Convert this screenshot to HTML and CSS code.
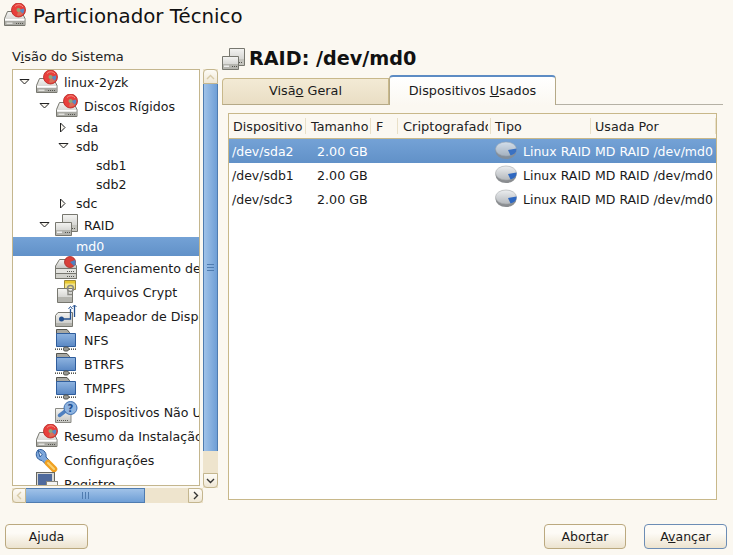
FILE: index.html
```html
<!DOCTYPE html>
<html lang="pt">
<head>
<meta charset="utf-8">
<title>Particionador Técnico</title>
<link rel="stylesheet" href="styles.css">
</head>
<body>
<svg class="defs" width="0" height="0" aria-hidden="true">
  <defs>
    <linearGradient id="gBox" x1="0" y1="0" x2="0" y2="1"><stop offset="0" stop-color="#f4f4f2"/><stop offset="1" stop-color="#c4c4c0"/></linearGradient>
    <linearGradient id="gFolder" x1="0" y1="0" x2="0" y2="1"><stop offset="0" stop-color="#8fb4e0"/><stop offset="1" stop-color="#5a88c4"/></linearGradient>
    <linearGradient id="gPie" x1="0" y1="0" x2="0" y2="1"><stop offset="0" stop-color="#eceef0"/><stop offset="1" stop-color="#b4b8bc"/></linearGradient>
    <g id="drive">
      <path d="M4.500 8.500 H18.500 L22 15.500 V22.500 H1.500 V15.500 Z" fill="url(#gBox)" stroke="#77776f"/>
      <rect x="2" y="16" width="19.500" height="1.500" fill="#fff"/>
      <rect x="2" y="18" width="19.500" height="4" fill="#aaaaa4"/>
      <path d="M13 20.500h7.500" stroke="#55554f" stroke-dasharray="1 1"/>
      <rect x="3.500" y="19.500" width="6" height="1.500" fill="#e2e2de"/>
    </g>
    <g id="hdred">
      <use href="#drive"/>
      <circle cx="15.500" cy="7" r="7" fill="#e8403c" stroke="#b52420" stroke-width=".8"/>
      <path d="M12 3.500 A5 5 0 0 1 20 4" fill="none" stroke="#f48a80"/>
      <path d="M15.500 7 L21 5.500 A5.800 5.800 0 0 1 20 11 Z" fill="#5a88c4"/>
      <path d="M15.500 7 L20 11 A6 6 0 0 1 14 12.500 Z" fill="#d8705a"/>
      <circle cx="15.500" cy="7" r="2" fill="#8fa878"/>
    </g>
    <g id="raidbox">
      <path d="M0.500 9.500 H16.500 V22.500 H0.500 Z" fill="url(#gBox)" stroke="#77776f"/>
      <rect x="1" y="17" width="15" height="5" fill="#b4b4ae"/>
      <rect x="2" y="18.500" width="5" height="1.500" fill="#eee"/>
      <path d="M10 19.500h5" stroke="#55554f" stroke-dasharray="1 1"/>
    </g>
    <g id="raid">
      <path d="M7.500 1.500 H22.500 V18.500 H7.500 Z" fill="url(#gBox)" stroke="#77776f"/>
      <rect x="8" y="12" width="14" height="6" fill="#c4c4be"/>
      <path d="M17 15.500h4" stroke="#55554f" stroke-dasharray="1 1"/>
      <use href="#raidbox"/>
    </g>
    <g id="lvm">
      <path d="M4.500 3.500 H17 L21.500 10 V12.500 H0.500 V10 Z" fill="url(#gBox)" stroke="#77776f"/>
      <rect x="0.500" y="12.500" width="21" height="5" fill="#e4e4e0" stroke="#77776f"/>
      <rect x="0.500" y="17.500" width="21" height="5" fill="#d0d0ca" stroke="#77776f"/>
      <path d="M12 15.500h8M12 20.500h8" stroke="#55554f" stroke-dasharray="1 1"/>
      <circle cx="15" cy="6" r="5.500" fill="#d8403a" stroke="#a52a24" stroke-width=".8"/>
      <path d="M15 6 L20 4 A5 5 0 0 1 19 10Z" fill="#4f80c0"/>
    </g>
    <g id="crypt">
      <path d="M9.500 0.500 H20.500 V9.500 H9.500 Z" fill="#f2e48a" stroke="#a08a38"/>
      <path d="M10 1H20V3.500H10Z" fill="#e8c830"/>
      <path d="M2.500 8.500 H17.500 V22.500 H2.500 Z" fill="url(#gBox)" stroke="#77776f"/>
      <rect x="3" y="17" width="14" height="5" fill="#b4b4ae"/>
      <circle cx="15.500" cy="8.500" r="3" fill="none" stroke="#8a8a84" stroke-width="1.600"/>
      <path d="M13 10.500 V14.500 H17" fill="none" stroke="#8a8a84" stroke-width="1.400"/>
    </g>
    <g id="mapper">
      <path d="M0.500 11.500 L3 8.500 H17.500 V22.500 H0.500 Z" fill="url(#gBox)" stroke="#77776f"/>
      <circle cx="6.500" cy="15" r="2.500" fill="#24508f"/>
      <path d="M6.500 15 H15.500 V5 M19.500 13 V1.500" fill="none" stroke="#24508f" stroke-width="1.300"/>
      <path d="M13.500 5 L15.500 2.500 L17.500 5 M17.500 3 L19.500 1 L21.500 3" fill="none" stroke="#24508f"/>
      <rect x="1" y="19" width="16" height="3" fill="#b4b4ae"/>
    </g>
    <g id="netfolder">
      <path d="M1.500 1.500 H12 L14.500 4.500 V17.500 H1.500 Z" fill="#a8a8a2" stroke="#55554f"/>
      <path d="M1.500 5.500 H20.500 V18.500 H1.500 Z" fill="url(#gFolder)" stroke="#2f5d9c"/>
      <path d="M0 20.500 H22" stroke="#99998f" stroke-dasharray="1 1"/>
      <path d="M0 21.500 H22" stroke="#55554f" stroke-dasharray="1 1"/>
      <rect x="8.500" y="19" width="5" height="4" rx="1.500" fill="#9a9a94" stroke="#55554f"/>
    </g>
    <g id="unknown">
      <path d="M0.500 8.500 H16 V22.500 H0.500 Z" fill="url(#gBox)" stroke="#8a8a84"/>
      <path d="M2 20.500h12" stroke="#55554f" stroke-dasharray="1 1"/>
      <path d="M4.500 15.500 L11 10.500" stroke="#4f80c0" stroke-width="3.500" stroke-linecap="round"/>
      <circle cx="15.500" cy="8" r="6.500" fill="#8fb4e0" stroke="#3f70b0"/>
      <text class="qmark" x="15.500" y="12">?</text>
    </g>
    <g id="wrench">
      <path d="M3 2 C-0.500 6 1.500 12 7 12.500 L11 16.500 L15 13 L11 9 C12 4 7 0 3 2 L7 6.500 L5 9 Z" fill="#7ea8dc" stroke="#2f5d9c"/>
      <path d="M13 15 L19 21" stroke="#f0a020" stroke-width="6.500" stroke-linecap="round"/>
      <path d="M13 15 L19 21" stroke="#fad070" stroke-width="2" stroke-linecap="round"/>
    </g>
    <g id="log">
      <rect x="1.500" y="0.500" width="18" height="17" fill="#d8d8d4" stroke="#66665f"/>
      <rect x="3" y="2" width="14" height="14" fill="#4f6a9c"/>
      <rect x="11.500" y="9.500" width="11" height="13" fill="#f4f4f2" stroke="#88887f"/>
    </g>
    <g id="pie">
      <ellipse cx="11" cy="11" rx="10.500" ry="8" fill="#8a8d90"/>
      <ellipse cx="11" cy="9" rx="10.500" ry="7" fill="url(#gPie)" stroke="#a4a7aa" stroke-width=".6"/>
      <path d="M13 10 L21.500 8.500 A10.500 7 0 0 1 15.500 15.500 Z" fill="#2f68c0"/>
    </g>
    <path id="arrowDown" d="M1 2.500 H10 L5.500 7 Z" fill="#faf7f0" stroke="#222"/>
    <path id="arrowRight" d="M2.500 1 V10 L7 5.500 Z" fill="#faf7f0" stroke="#222"/>
  </defs>
</svg>

<header class="app-title">
  <svg class="title-icon" viewBox="0 0 24 24"><use href="#hdred"/></svg>
  <h1>Particionador Técnico</h1>
</header>

<main class="columns">
  <section class="left">
    <div class="left-label">V<u>i</u>são do Sistema</div>
    <div class="tree-area">
      <div class="tree">
        <div class="row l0 big"><svg class="exp" viewBox="0 0 11 11"><use href="#arrowDown"/></svg><svg class="ic" viewBox="0 0 24 24"><use href="#hdred"/></svg><span>linux-2yzk</span></div>
        <div class="row l1 big"><svg class="exp" viewBox="0 0 11 11"><use href="#arrowDown"/></svg><svg class="ic" viewBox="0 0 24 24"><use href="#hdred"/></svg><span>Discos Rígidos</span></div>
        <div class="row l2"><svg class="exp" viewBox="0 0 11 11"><use href="#arrowRight"/></svg><span>sda</span></div>
        <div class="row l2"><svg class="exp" viewBox="0 0 11 11"><use href="#arrowDown"/></svg><span>sdb</span></div>
        <div class="row l3"><span>sdb1</span></div>
        <div class="row l3"><span>sdb2</span></div>
        <div class="row l2"><svg class="exp" viewBox="0 0 11 11"><use href="#arrowRight"/></svg><span>sdc</span></div>
        <div class="row l1 big"><svg class="exp" viewBox="0 0 11 11"><use href="#arrowDown"/></svg><svg class="ic" viewBox="0 0 24 24"><use href="#raid"/></svg><span>RAID</span></div>
        <div class="row l4 selected"><span>md0</span></div>
        <div class="row l1 big"><i class="exp"></i><svg class="ic" viewBox="0 0 24 24"><use href="#lvm"/></svg><span>Gerenciamento de Volumes</span></div>
        <div class="row l1 big"><i class="exp"></i><svg class="ic" viewBox="0 0 24 24"><use href="#crypt"/></svg><span>Arquivos Crypt</span></div>
        <div class="row l1 big"><i class="exp"></i><svg class="ic" viewBox="0 0 24 24"><use href="#mapper"/></svg><span>Mapeador de Dispositivos</span></div>
        <div class="row l1 big"><i class="exp"></i><svg class="ic" viewBox="0 0 24 24"><use href="#netfolder"/></svg><span>NFS</span></div>
        <div class="row l1 big"><i class="exp"></i><svg class="ic" viewBox="0 0 24 24"><use href="#netfolder"/></svg><span>BTRFS</span></div>
        <div class="row l1 big"><i class="exp"></i><svg class="ic" viewBox="0 0 24 24"><use href="#netfolder"/></svg><span>TMPFS</span></div>
        <div class="row l1 big"><i class="exp"></i><svg class="ic" viewBox="0 0 24 24"><use href="#unknown"/></svg><span>Dispositivos Não Usados</span></div>
        <div class="row l0 big"><i class="exp"></i><svg class="ic" viewBox="0 0 24 24"><use href="#hdred"/></svg><span>Resumo da Instalação</span></div>
        <div class="row l0 big"><i class="exp"></i><svg class="ic" viewBox="0 0 24 24"><use href="#wrench"/></svg><span>Configurações</span></div>
        <div class="row l0 big"><i class="exp"></i><svg class="ic" viewBox="0 0 24 24"><use href="#log"/></svg><span>Registro</span></div>
      </div>
      <div class="vbar">
        <div class="sb-btn btn-top"><svg viewBox="0 0 9 6" class="chev"><path d="M1 5 L4.500 1.500 L8 5" class="chev-dim"/></svg></div>
        <div class="vthumb"><div class="vgrip"></div></div>
        <div class="vtrough"></div>
        <div class="sb-btn btn-bottom"><svg viewBox="0 0 9 6" class="chev"><path d="M1 1 L4.500 4.500 L8 1" class="chev-dark"/></svg></div>
      </div>
    </div>
    <div class="hbar">
      <div class="hb-btn hb-left"><svg viewBox="0 0 6 9" class="chev-h"><path d="M5 1 L1.500 4.500 L5 8" class="chev-dim"/></svg></div>
      <div class="hthumb"><div class="hgrip"></div></div>
      <div class="htrough"></div>
      <div class="hb-btn hb-right"><svg viewBox="0 0 6 9" class="chev-h"><path d="M1 1 L4.500 4.500 L1 8" class="chev-dark"/></svg></div>
    </div>
  </section>

  <section class="right">
    <div class="heading">
      <svg class="heading-icon" viewBox="0 0 24 24"><use href="#raid"/></svg>
      <h2>RAID: /dev/md0</h2>
    </div>
    <div class="tabs">
      <div class="tab inactive">Visã<u>o</u> Geral</div>
      <div class="tab active">Dispositivos <u>U</u>sados</div>
      <div class="tab-rest"></div>
    </div>
    <div class="table">
      <div class="thead grid">
        <div class="th">Dispositivo</div>
        <div class="th">Tamanho</div>
        <div class="th">F</div>
        <div class="th"><div class="th-clip">Criptografado</div></div>
        <div class="th">Tipo</div>
        <div class="th">Usada Por</div>
      </div>
      <div class="tr grid selected">
        <div class="td first">/dev/sda2</div><div class="td size">2.00 GB</div><div class="td"></div><div class="td"></div>
        <div class="td tipo"><svg class="pie" viewBox="0 0 22 22"><use href="#pie"/></svg><span>Linux RAID</span></div>
        <div class="td used">MD RAID /dev/md0</div>
      </div>
      <div class="tr grid">
        <div class="td first">/dev/sdb1</div><div class="td size">2.00 GB</div><div class="td"></div><div class="td"></div>
        <div class="td tipo"><svg class="pie" viewBox="0 0 22 22"><use href="#pie"/></svg><span>Linux RAID</span></div>
        <div class="td used">MD RAID /dev/md0</div>
      </div>
      <div class="tr grid">
        <div class="td first">/dev/sdc3</div><div class="td size">2.00 GB</div><div class="td"></div><div class="td"></div>
        <div class="td tipo"><svg class="pie" viewBox="0 0 22 22"><use href="#pie"/></svg><span>Linux RAID</span></div>
        <div class="td used">MD RAID /dev/md0</div>
      </div>
    </div>
  </section>
</main>

<footer class="footer">
  <button class="btn" type="button">Ajuda</button>
  <div class="footer-right">
    <button class="btn narrow" type="button">Abo<u>r</u>tar</button>
    <button class="btn default" type="button">A<u>v</u>ançar</button>
  </div>
</footer>
</body>
</html>
```
FILE: styles.css
```css
* { box-sizing: border-box; }
html, body { margin: 0; padding: 0; }
body {
  width: 733px;
  height: 555px;
  overflow: hidden;
  background: #fbf8f1;
  color: #1a1a1a;
  font-family: "DejaVu Sans", sans-serif;
  font-size: 12.500px;
  display: flex;
  flex-direction: column;
}
.defs { display: block; height: 0; }
.qmark { font: bold 10px "DejaVu Sans", sans-serif; fill: #1f4f90; text-anchor: middle; }

.app-title {
  height: 46px;
  flex: none;
  padding: 3px 0 0 3px;
  display: flex;
  align-items: flex-start;
  gap: 6px;
}
.title-icon { width: 24px; height: 24px; flex: none; }
.app-title h1 {
  margin: 0;
  font-size: 19.800px;
  font-weight: normal;
  line-height: 28px;
  color: #111;
}

.columns { display: flex; flex: none; height: 478px; }

.left { width: 210px; flex: none; padding: 4px 0 0 12px; }
.left-label { height: 14px; line-height: 14px; margin-bottom: 5px; color: #222; font-size: 13px; }
.tree-area { display: flex; height: 419px; }
.tree {
  width: 188px;
  height: 417px;
  border: 1px solid #c4b68e;
  background: #fff;
  overflow: hidden;
  flex: none;
  font-size: 12.600px;
}
.row {
  display: flex;
  align-items: center;
  height: 19px;
  white-space: nowrap;
}
.row.big { height: 24px; }
.row.l0 { padding-left: 6px; }
.row.l1 { padding-left: 26px; }
.row.l2 { padding-left: 45px; }
.row.l3 { padding-left: 83px; }
.row.l4 { padding-left: 63px; }
.exp { width: 11px; height: 11px; flex: none; display: block; }
.ic { width: 24px; height: 24px; flex: none; margin: 0 5px 0 5px; }
.row.l2 .exp { margin-right: 7px; }
.selected { background: linear-gradient(#74a2d6, #6191c8); color: #fff; }
.selected .pie { opacity: .8; }

.vbar {
  width: 15px;
  height: 419px;
  margin-left: 3px;
  flex: none;
  display: flex;
  flex-direction: column;
  background: #eee4cd;
}
.sb-btn {
  height: 15px;
  flex: none;
  background: linear-gradient(#fdfbf6, #efe7d5);
  border: 1px solid #c4b68e;
  display: flex;
  align-items: center;
  justify-content: center;
}
.btn-top { border-radius: 4px 4px 0 0; }
.btn-bottom { border-radius: 0 0 4px 4px; }
.chev { width: 9px; height: 6px; }
.chev-h { width: 6px; height: 9px; }
.chev-dim, .chev-dark { fill: none; stroke-width: 1.400; }
.chev-dim { stroke: #d8cba8; }
.chev-dark { stroke: #333; }
.vthumb {
  height: 367px;
  flex: none;
  background: linear-gradient(90deg, #a0c2e8, #6f9fd6);
  border: 1px solid #4f7cb0;
  border-width: 0 1px;
  display: flex;
  align-items: center;
  justify-content: center;
}
.vgrip { width: 7px; height: 7px; border-top: 1px solid #4f7cb0; border-bottom: 1px solid #4f7cb0; background: linear-gradient(#4f7cb0, #4f7cb0) center / 100% 1px no-repeat; }
.vtrough { flex: 1; }

.hbar {
  width: 191px;
  height: 15px;
  display: flex;
  background: #eee4cd;
}
.hb-btn {
  width: 15px;
  flex: none;
  background: linear-gradient(#fdfbf6, #efe7d5);
  border: 1px solid #c4b68e;
  display: flex;
  align-items: center;
  justify-content: center;
}
.hb-left { border-radius: 4px 0 0 4px; width: 14px; }
.hb-right { border-radius: 0 4px 4px 0; }
.hthumb {
  width: 119px;
  flex: none;
  background: linear-gradient(#a0c2e8, #6f9fd6);
  border: 1px solid #4f7cb0;
  border-width: 1px 1px 1px 0;
  display: flex;
  align-items: center;
  justify-content: center;
}
.hgrip { width: 7px; height: 7px; border-left: 1px solid #4f7cb0; border-right: 1px solid #4f7cb0; background: linear-gradient(#4f7cb0, #4f7cb0) center / 1px 100% no-repeat; }
.htrough { flex: 1; }

.right { width: 501px; margin-left: 12px; flex: none; display: flex; flex-direction: column; }
.heading { height: 29px; flex: none; display: flex; align-items: flex-start; padding-top: 1px; gap: 3px; }
.heading-icon { width: 24px; height: 24px; flex: none; }
.heading h2 { margin: 0; font-size: 19.200px; line-height: 24px; font-weight: bold; color: #111; }

.tabs { display: flex; align-items: flex-end; height: 30px; flex: none; font-size: 12.800px; }
.tab { text-align: center; white-space: nowrap; }
.tab.inactive {
  width: 167px;
  height: 27px;
  line-height: 24px;
  background: linear-gradient(#f3ead5, #e9dec4);
  border: 1px solid #c8b88a;
  border-bottom-color: #b5a987;
  border-radius: 4px 0 0 0;
}
.tab.active {
  width: 167px;
  height: 30px;
  line-height: 27px;
  background: linear-gradient(#fff, #fbf8f1);
  border: 1px solid #b5a987;
  border-top: 2px solid #5d8cc4;
  border-bottom: 0;
  border-radius: 4px 4px 0 0;
}
.tab-rest { flex: 1; height: 1px; background: #b5b1a5; }

.table {
  margin: 8px 0 0 6px;
  width: 489px;
  height: 387px;
  border: 1px solid #c8b88a;
  background: #fff;
  overflow: hidden;
  flex: none;
}
.grid { display: grid; grid-template-columns: 77px 65px 27px 93px 100px 125px; }
.thead { height: 25px; background: #fbf8f1; border-bottom: 1px solid #c8b88a; font-size: 12.700px; }
.th {
  height: 24px;
  padding: 1px 0 0 4px;
  line-height: 23px;
  overflow: hidden;
  white-space: nowrap;
  color: #222;
  background: linear-gradient(#e9e0c8, #e9e0c8) right 4px / 1px 16px no-repeat;
}
.th:nth-child(n+2):nth-child(-n+4) { padding-left: 5px; }
.th-clip { width: 85px; overflow: hidden; font-size: 13px; }
.tr { height: 24px; align-items: stretch; }
.td { white-space: nowrap; overflow: hidden; padding-top: 1px; line-height: 23px; }
.td.first { padding-left: 3px; }
.td.size { padding-left: 11px; font-size: 12.700px; }
.td.tipo { display: flex; align-items: center; padding: 0 0 0 4px; gap: 6px; }
.td.tipo span { padding-top: 1px; }
.td.used { padding-left: 4px; }
.pie { width: 22px; height: 22px; flex: none; }

.footer {
  flex: none;
  height: 31px;
  padding: 0 6px 6px 5px;
  display: flex;
  justify-content: space-between;
  align-items: flex-start;
}
.footer-right { display: flex; gap: 18px; }
.btn {
  width: 83px;
  height: 25px;
  padding: 0;
  font: inherit;
  color: #1a1a1a;
  background: linear-gradient(#fdfbf6 35%, #ece3cf);
  border: 1px solid #bba97f;
  border-radius: 4px;
}
.btn.narrow { width: 82px; }
.btn.default { border-color: #6c8db5; }
```
